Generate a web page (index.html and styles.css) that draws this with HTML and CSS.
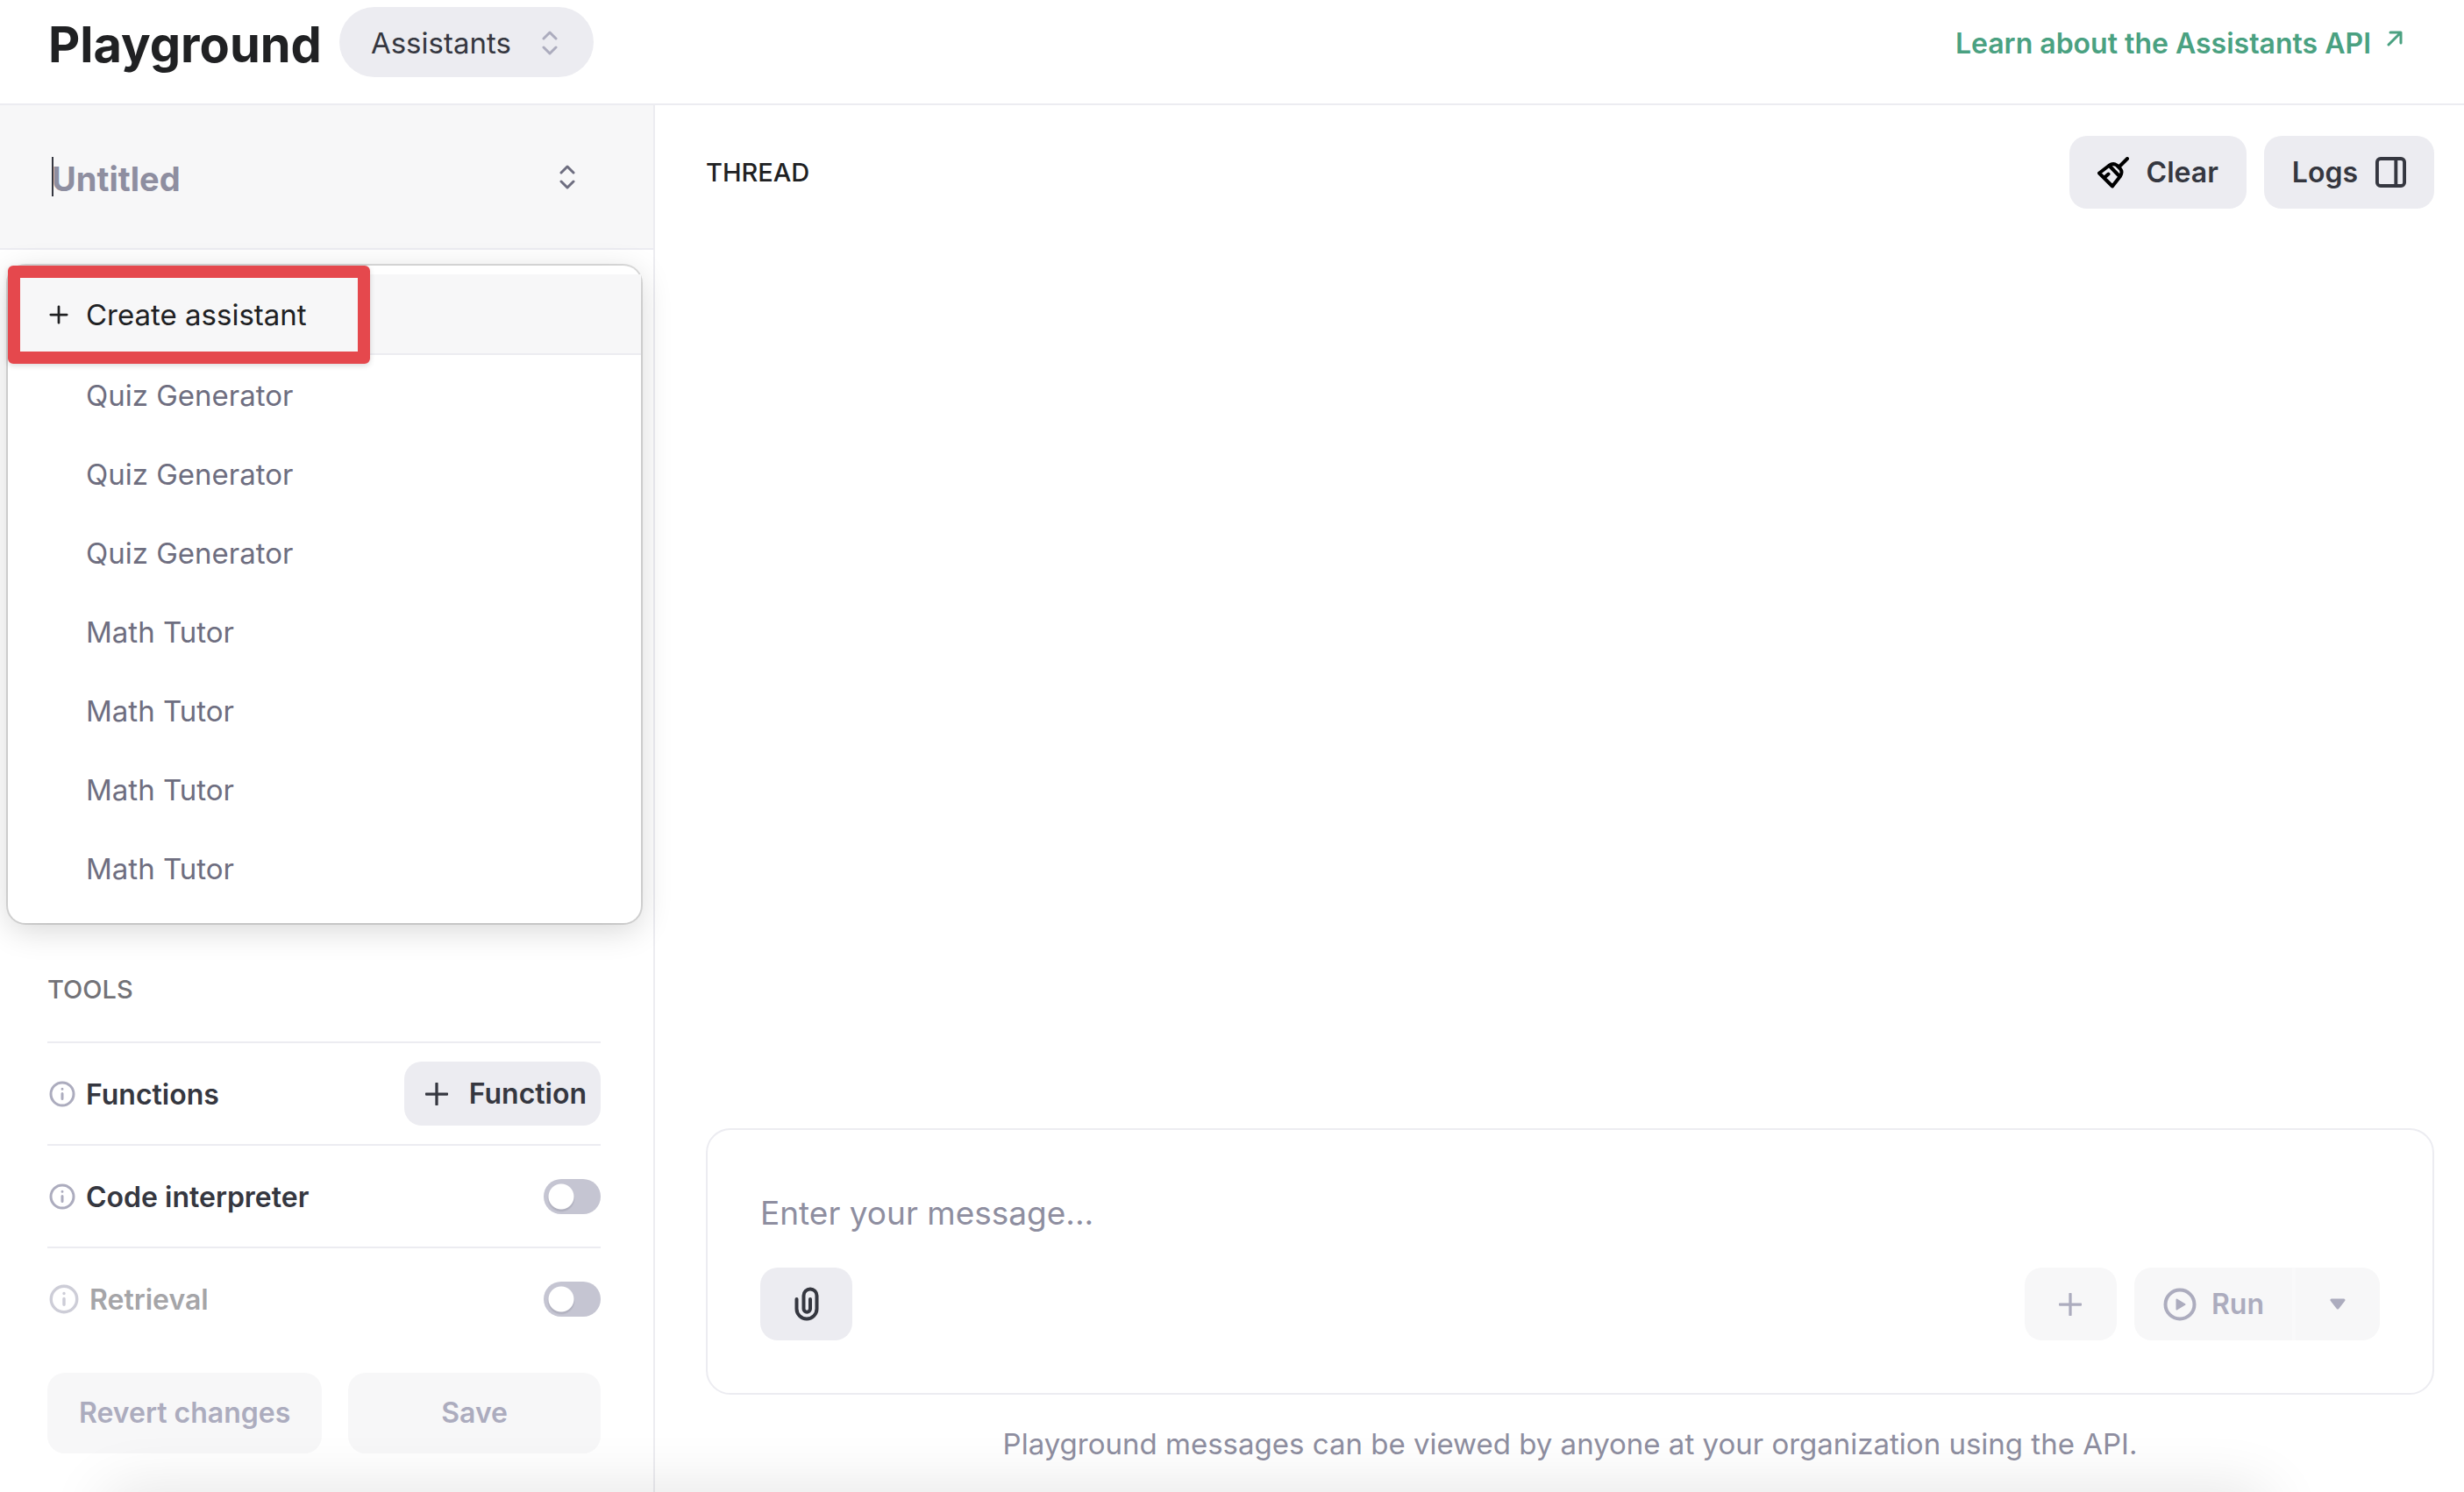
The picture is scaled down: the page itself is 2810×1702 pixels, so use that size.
FILE: index.html
```html
<!DOCTYPE html>
<html lang="en">
<head>
<meta charset="utf-8">
<title>Playground</title>
<link rel="stylesheet" href="styles.css">
</head>
<body>
<div class="app">
  <header class="topbar">
    <h1 class="title">Playground</h1>
    <button class="mode" type="button">Assistants
      <svg class="updown" viewBox="0 0 20 28" aria-hidden="true"><path d="M3 9l7-7 7 7M3 19l7 7 7-7"/></svg>
    </button>
    <a class="learn" href="#">Learn about the Assistants API
      <svg class="out" viewBox="0 0 18 18" aria-hidden="true"><path d="M2 16L15 3M4 2h12v12"/></svg>
    </a>
  </header>
  <aside class="sidebar">
    <div class="picker">
      <input class="name" type="text" placeholder="Untitled" aria-label="Assistant name">
      <span class="caret"></span>
      <svg class="updown dark" viewBox="0 0 20 28" aria-hidden="true"><path d="M3 9l7-7 7 7M3 19l7 7 7-7"/></svg>
      <div class="menu">
        <button class="item create" type="button"><svg class="plus" viewBox="0 0 24 24" aria-hidden="true"><path d="M12 2v20M2 12h20"/></svg>Create assistant</button>
        <button class="item" type="button">Quiz Generator</button>
        <button class="item" type="button">Quiz Generator</button>
        <button class="item" type="button">Quiz Generator</button>
        <button class="item" type="button">Math Tutor</button>
        <button class="item" type="button">Math Tutor</button>
        <button class="item" type="button">Math Tutor</button>
        <button class="item" type="button">Math Tutor</button>
        <span class="highlight"></span>
      </div>
    </div>
    <section class="tools">
      <h2 class="label">TOOLS</h2>
      <div class="tool">
        <svg class="info" viewBox="0 0 30 30" aria-hidden="true"><circle cx="15" cy="15" r="13"/><path d="M15 14.500v6M15 9.200v.1"/></svg>
        <span class="tool-name">Functions</span>
        <button class="add" type="button"><svg class="plus" viewBox="0 0 24 24" aria-hidden="true"><path d="M12 1v22M1 12h22"/></svg>Function</button>
      </div>
      <div class="tool">
        <svg class="info" viewBox="0 0 30 30" aria-hidden="true"><circle cx="15" cy="15" r="13"/><path d="M15 14.500v6M15 9.200v.1"/></svg>
        <label class="tool-name" for="code">Code interpreter</label>
        <input class="switch" id="code" type="checkbox">
      </div>
      <div class="tool faded">
        <svg class="info" viewBox="0 0 30 30" aria-hidden="true"><circle cx="15" cy="15" r="13"/><path d="M15 14.500v6M15 9.200v.1"/></svg>
        <label class="tool-name" for="retrieval">Retrieval</label>
        <input class="switch" id="retrieval" type="checkbox">
      </div>
    </section>
    <div class="actions">
      <button class="ghost" type="button" disabled>Revert changes</button>
      <button class="ghost grow" type="button" disabled>Save</button>
    </div>
  </aside>
  <main class="thread">
    <div class="bar">
      <h2 class="heading">THREAD</h2>
      <button class="btn" type="button">
        <svg class="icon broom" viewBox="0 0 36 36" aria-hidden="true"><path d="M34 2L25 11M2 18.500L13 10Q18 6.500 22 9.500L26 13.500Q29 17 26 22L17 33.500ZM14 10.500L25.500 22.500M8 23.500l4.500-4"/></svg>Clear</button>
      <button class="btn" type="button">Logs
        <svg class="icon panel" viewBox="0 0 36 36" aria-hidden="true"><rect x="2" y="2" width="32" height="32" rx="4"/><path d="M24 2v32"/></svg></button>
    </div>
    <form class="composer">
      <textarea class="message" rows="1" placeholder="Enter your message..." aria-label="Message"></textarea>
      <div class="controls">
        <button class="btn square" type="button" aria-label="Attach file"><svg class="icon" viewBox="0 0 37 40" aria-hidden="true"><path d="M7 14v11a11.500 11.500 0 0 0 23 0V10a7.500 7.500 0 0 0-15 0v15a3.750 3.750 0 0 0 7.500 0V14"/></svg></button>
        <span class="space"></span>
        <button class="btn square off" type="button" aria-label="Add message" disabled><svg class="plus" viewBox="0 0 24 24" aria-hidden="true"><path d="M12 1v22M1 12h22"/></svg></button>
        <div class="split">
          <button class="run" type="button" disabled><svg class="icon" viewBox="0 0 40 40" aria-hidden="true"><circle cx="20" cy="20" r="16.500"/><path class="solid" d="M16.500 14.500l9 5.500-9 5.500z"/></svg>Run</button>
          <button class="more" type="button" aria-label="Run options" disabled><svg class="down" viewBox="0 0 18 14" aria-hidden="true"><path d="M2 2h14l-7 9z"/></svg></button>
        </div>
      </div>
    </form>
    <p class="note">Playground messages can be viewed by anyone at your organization using the API.</p>
  </main>
  <div class="shade"></div>
</div>
</body>
</html>
```
FILE: styles.css
```css
* { box-sizing: border-box; }
body { margin: 0; background: #fff; color: #353740; font: 600 32px/40px Inter, "Liberation Sans", sans-serif; }
button, input, textarea { font: inherit; color: inherit; border: 0; background: none; margin: 0; padding: 0; }
h1, h2, p { margin: 0; }
svg { fill: none; stroke: currentColor; stroke-width: 3; stroke-linecap: round; stroke-linejoin: round; flex: none; }
.app { min-height: 100vh; display: grid; grid-template: 120px 1fr / 747px 1fr; position: relative; overflow: hidden; }
.topbar { grid-column: 1 / -1; display: flex; align-items: center; padding: 0 70px 22px 55px; border-bottom: 2px solid #ececf1; }
.title { padding-top: 6px; font-size: 56px; line-height: 64px; font-weight: 700; color: #202123; }
.mode { display: flex; align-items: center; gap: 34px; height: 80px; margin-left: 20px; padding: 2px 40px 0 36px; border-radius: 40px; background: #ececf1; font-size: 33px; font-weight: 400; }
.updown { width: 20px; height: 28px; color: #acacbe; }
.updown.dark { color: #6e6e80; }
.learn { margin-left: auto; display: flex; gap: 18px; padding-top: 4px; color: #4aa181; text-decoration: none; }
.out { width: 18px; height: 18px; margin-top: 5px; }

.sidebar { display: flex; flex-direction: column; border-right: 2px solid #ececf1; }
.picker { position: relative; display: flex; align-items: center; justify-content: space-between; height: 165px; padding: 0 88px 0 59px; background: #f7f7f8; border-bottom: 2px solid #ececf1; }
.name { flex: 1; min-width: 0; padding-top: 4px; font-size: 38px; line-height: 48px; font-weight: 700; }
.name::placeholder, .message::placeholder { color: #8e8ea0; opacity: 1; }
.caret { position: absolute; left: 59px; top: 59px; width: 2px; height: 45px; background: #353740; }
.menu { position: absolute; left: 9px; right: 14px; top: 183px; padding: 10px 0 18px; border-radius: 20px; background: #fff; box-shadow: 0 0 0 2px rgba(0,0,0,.13), 0 8px 36px rgba(0,0,0,.16); z-index: 1; }
.item { display: flex; align-items: center; width: 100%; height: 90px; padding: 2px 0 0 89px; color: #6e6e80; font-size: 33px; font-weight: 400; }
.item.create { height: 92px; padding-left: 47px; gap: 20px; background: #f7f7f8; border-bottom: 2px solid #ececf1; color: #202123; }
.plus { width: 26px; height: 26px; }
.item .plus { width: 22px; height: 22px; }
.highlight { position: absolute; left: 0; top: 0; width: 413px; height: 112px; border: 14px solid #e5484d; border-radius: 6px; box-shadow: 0 2px 6px rgba(0,0,0,.15); }
.tools { margin-top: 815px; padding: 0 60px 0 54px; }
.label { font-size: 29px; line-height: 58px; font-weight: 550; color: #737378; height: 88px; }
.tool { display: flex; align-items: center; gap: 12px; height: 117px; padding-left: 2px; border-top: 2px solid #ececf1; }
.tool-name { padding-top: 2px; }
.info { width: 30px; height: 30px; color: #acacbe; }
.add { display: flex; align-items: center; gap: 24px; height: 73px; margin-left: auto; padding: 0 16px 0 24px; border-radius: 20px; background: #ececf1; }
.switch { appearance: none; width: 65px; height: 40px; margin-left: auto; border-radius: 20px; background: radial-gradient(circle at 20px 20px, #fff 14px, transparent 15px), radial-gradient(circle at 20px 22px, #b0b0be 14px, #c5c5d2 16px); }
.faded .tool-name { color: #a5a5a8; }
.faded .info { width: 34px; height: 34px; opacity: .6; }
.actions { display: flex; gap: 30px; padding: 27px 60px 0 54px; }
.ghost { height: 92px; padding: 0 36px; border-radius: 20px; background: #f7f7f8; color: #acacbe; }
.grow { flex: 1; }

.thread { display: flex; flex-direction: column; padding: 35px 34px 0 58px; min-width: 0; }
.bar { display: flex; align-items: center; gap: 20px; }
.heading { margin-right: auto; font-size: 29px; line-height: 40px; font-weight: 550; color: #202123; }
.btn { display: flex; align-items: center; gap: 20px; height: 83px; padding: 0 32px; border-radius: 20px; background: #ececf1; }
.icon { width: 40px; height: 40px; stroke-width: 4; }
.broom { width: 36px; height: 36px; color: #000; }
.panel { width: 35px; height: 35px; }
.composer { margin-top: auto; border: 2px solid #ececf1; border-radius: 28px; padding: 65px 60px 60px; }
.message { display: block; width: 100%; height: 60px; resize: none; font-size: 37px; line-height: 60px; font-weight: 400; }
.controls { display: flex; align-items: center; gap: 20px; margin-top: 32px; }
.space { flex: 1; }
.square { width: 105px; justify-content: center; padding: 0; }
.off { background: #f7f7f8; color: #acacbe; }
.split { display: flex; border-radius: 20px; overflow: hidden; background: #f7f7f8; color: #acacbe; }
.run { display: flex; align-items: center; gap: 16px; height: 83px; padding: 0 32px; border-right: 4px solid #f9f9fa; }
.more { display: flex; align-items: center; justify-content: center; width: 96px; }
.down { width: 18px; height: 14px; fill: currentColor; }
.solid { fill: currentColor; stroke-width: 2; }
.note { padding: 36px 0 35px; text-align: center; color: #8e8ea0; font-size: 33px; font-weight: 400; }
.shade { position: absolute; left: 120px; right: 224px; bottom: -60px; height: 60px; border-radius: 20px; box-shadow: 0 0 70px rgba(0,0,0,.12); pointer-events: none; }
```
